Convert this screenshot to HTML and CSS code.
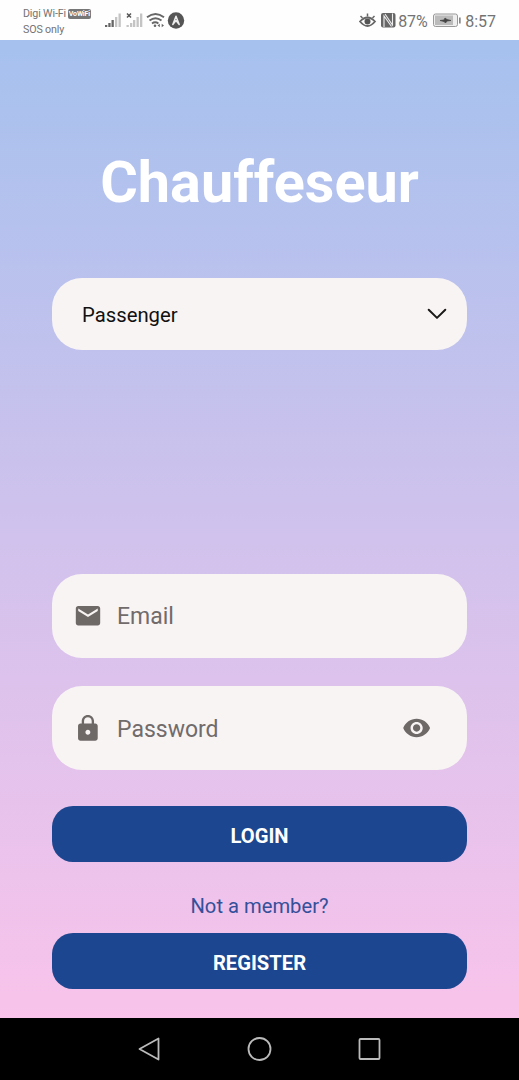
FILE: index.html
```html
<!DOCTYPE html>
<html lang="en">
<head>
<meta charset="utf-8">
<title>Chauffeseur</title>
<link rel="stylesheet" href="styles.css">
</head>
<body>
<header class="status">
  <div class="carrier">
    <div class="carrier-line"><span>Digi Wi-Fi</span><span class="vowifi">VoWiFi</span></div>
    <div class="carrier-line">SOS only</div>
  </div>
  <svg class="signals" width="82" height="20" viewBox="104 10 82 20">
    <g fill="#666"><path d="M105 25h2.300v2h-2.300zM108.300 23h2.300v4h-2.300zM111.500 20h2.300v7h-2.300z"/></g>
    <g fill="#c4c4c4"><path d="M115 17h2.300v10h-2.300zM118.500 13.500h2.300v13.500h-2.300zM126.500 25h2.300v2h-2.300zM130 23h2.300v4h-2.300zM133 20h2.300v7h-2.300zM136.500 17h2.300v10h-2.300zM140 13.500h2.300v13.500h-2.300z"/></g>
    <path d="m127 13.500 4 4m0-4-4 4" stroke="#555" stroke-width="1.500"/>
    <g fill="none" stroke="#666" stroke-width="1.900"><path d="M147 17.300q8.500-6.600 17 0M149.500 20.500q6-4.600 12 0M152 23.500q3.200-2.400 6.400 0"/></g>
    <circle cx="155" cy="25.800" r="1.300" fill="#666"/>
    <path d="M157.500 25.500l2.300-1.800v3.600zM164 25.500l-2.300-1.800v3.600z" fill="#666"/>
    <circle cx="176" cy="20.500" r="8.200" fill="#555"/>
    <path d="M172.800 24.500 176 16.300l3.200 8.200-3.200-4z" fill="#555" stroke="#eee" stroke-width="1.500" stroke-linejoin="round"/>
  </svg>
  <div class="system">
    <svg width="38" height="20" viewBox="359 10 38 20">
      <path d="M360 21.500q7.500-8 15 0-7.500 9-15 0z" fill="none" stroke="#666" stroke-width="1.800"/>
      <circle cx="367.500" cy="21.500" r="3" fill="#555"/>
      <path d="m360.500 16 2 2M367.500 13.500v3M374.500 16l-2 2" stroke="#666" stroke-width="1.500"/>
      <rect x="381" y="13" width="14.500" height="14.500" rx="2" fill="#666"/>
      <path d="M384 27v-11l7.500 10.500M392.500 13.500v11.500l-7.500-11" fill="none" stroke="#eee" stroke-width="1.100"/>
    </svg>
    <span class="battery-level">87%</span>
    <svg class="battery" width="28" height="16" viewBox="433 12 28 16">
      <rect x="433.500" y="14" width="24" height="12.500" rx="2" fill="#eee" stroke="#999"/>
      <path d="M435 15.500h18v9.500h-18z" fill="#bbb"/>
      <path d="M459 17.500h1.700v6h-1.700z" fill="#888"/>
      <path d="m440 20.500 4-.5 1-2 2 1.500 4 1-4 .5-1.500 2-1.500-1.500z" fill="#444" stroke="#444" stroke-width=".7"/>
    </svg>
    <span class="clock">8:57</span>
  </div>
</header>

<main class="screen">
  <h1 class="title">Chauffeseur</h1>
  <div class="field role">
    <span>Passenger</span>
    <svg class="chevron" width="20" height="12" viewBox="0 0 20 12"><path d="m1.700 1.700 8.300 8.200 8.300-8.200" fill="none" stroke="#1b1918" stroke-width="2" stroke-linecap="round" stroke-linejoin="round"/></svg>
  </div>
  <div class="field email">
    <svg class="icon" width="30" height="30" viewBox="-.3 -.1 24.600 24.600"><path d="M20 4H4c-1.100 0-1.990.9-1.990 2L2 18c0 1.100.9 2 2 2h16c1.100 0 2-.9 2-2V6c0-1.100-.9-2-2-2zm0 4-8 5-8-5V6l8 5 8-5v2z"/></svg>
    <span>Email</span>
  </div>
  <div class="field password">
    <svg class="icon" width="30" height="30" viewBox="-.1 -.6 24.400 24.400"><path d="M18 8h-1V6c0-2.760-2.240-5-5-5S7 3.240 7 6v2H6c-1.100 0-2 .9-2 2v10c0 1.100.9 2 2 2h12c1.100 0 2-.9 2-2V10c0-1.100-.9-2-2-2zm-6 9c-1.100 0-2-.9-2-2s.9-2 2-2 2 .9 2 2-.9 2-2 2zm3.100-9H8.900V6c0-1.710 1.390-3.100 3.100-3.100s3.100 1.390 3.100 3.100v2z"/></svg>
    <span>Password</span>
    <svg class="icon reveal" width="30" height="30" viewBox="0 -.3 24.600 24.600"><path d="M12 4.500C7 4.500 2.730 7.610 1 12c1.730 4.390 6 7.500 11 7.500s9.270-3.110 11-7.500c-1.730-4.390-6-7.500-11-7.500zM12 17c-2.760 0-5-2.240-5-5s2.240-5 5-5 5 2.240 5 5-2.240 5-5 5zm0-8c-1.660 0-3 1.340-3 3s1.340 3 3 3 3-1.340 3-3-1.340-3-3-3z"/></svg>
  </div>
  <button class="action">LOGIN</button>
  <p class="hint">Not a member?</p>
  <button class="action">REGISTER</button>
</main>

<nav class="navbar">
  <svg width="26" height="26" viewBox="0 0 26 26"><path d="M21.500 2.500v21L2.500 13z"/></svg>
  <svg width="26" height="26" viewBox="0 0 26 26"><circle cx="12.500" cy="13" r="11"/></svg>
  <svg width="26" height="26" viewBox="0 0 26 26"><rect x="2.500" y="3" width="20" height="20" rx="1"/></svg>
</nav>
</body>
</html>
```
FILE: styles.css
```css
* { box-sizing: border-box; }
body {
  margin: 0;
  height: 1080px;
  display: flex;
  flex-direction: column;
  font-family: Roboto, "Liberation Sans", sans-serif;
  overflow: hidden;
}
.status {
  height: 40px;
  flex: none;
  display: flex;
  align-items: center;
  padding: 0 23px;
  background: #fefefe;
  color: #737373;
}
.carrier { width: 81px; font-size: 10.700px; line-height: 16px; padding-top: 3px; white-space: nowrap; }
.carrier-line { display: flex; align-items: center; gap: 2px; letter-spacing: -0.15px; }
.vowifi {
  width: 23px;
  height: 10px;
  border-radius: 2px;
  background: #777;
  color: #fff;
  font-size: 7px;
  font-weight: 700;
  line-height: 10px;
  text-align: center;
}
.system { margin-left: auto; display: flex; align-items: center; }
.battery-level { width: 36px; font-size: 16px; padding: 3px 0 0 1px; line-height: 20px; letter-spacing: -0.1px; }
.clock { font-size: 16px; line-height: 20px; padding: 3px 0 0 4px; }

.screen {
  height: 978px;
  flex: none;
  display: flex;
  flex-direction: column;
  padding: 103px 52px 0;
  background: linear-gradient(#a6c1ee, #f9c3eb);
}
.title {
  margin: 0 -20px 55px;
  height: 80px;
  line-height: 80px;
  font-size: 57.600px;
  font-weight: 700;
  color: #fff;
  text-align: center;
}
.field {
  height: 84px;
  flex: none;
  display: flex;
  align-items: center;
  padding: 0 35px 0 21px;
  border-radius: 30px;
  background: #f8f4f4;
  color: #716b6b;
  font-size: 23px;
}
.field span { padding-top: 2px; }
.role { height: 72px; margin-bottom: 224px; padding: 0 20px 0 30px; color: #111; font-size: 20.300px; }
.chevron { margin-left: auto; }
.email { margin-bottom: 28px; }
.email span { padding-top: 1px; }
.password { margin-bottom: 36px; }
.icon { fill: #6e6867; margin-right: 14px; }
.reveal { margin: 0 0 0 auto; }
.action {
  height: 56px;
  flex: none;
  border: 0;
  border-radius: 21px;
  padding: 3px 0 0;
  background: #1c468f;
  color: #fff;
  font: 700 20.200px Roboto, "Liberation Sans", sans-serif;
}
.hint { margin: 30px 0 13px; height: 28px; line-height: 28px; font-size: 20.200px; color: #34509a; text-align: center; }

.navbar {
  height: 62px;
  flex: none;
  display: flex;
  justify-content: center;
  align-items: center;
  gap: 84px;
  background: #000;
}
.navbar svg { fill: none; stroke: #bbb; stroke-width: 1.800; stroke-linejoin: round; }
```
